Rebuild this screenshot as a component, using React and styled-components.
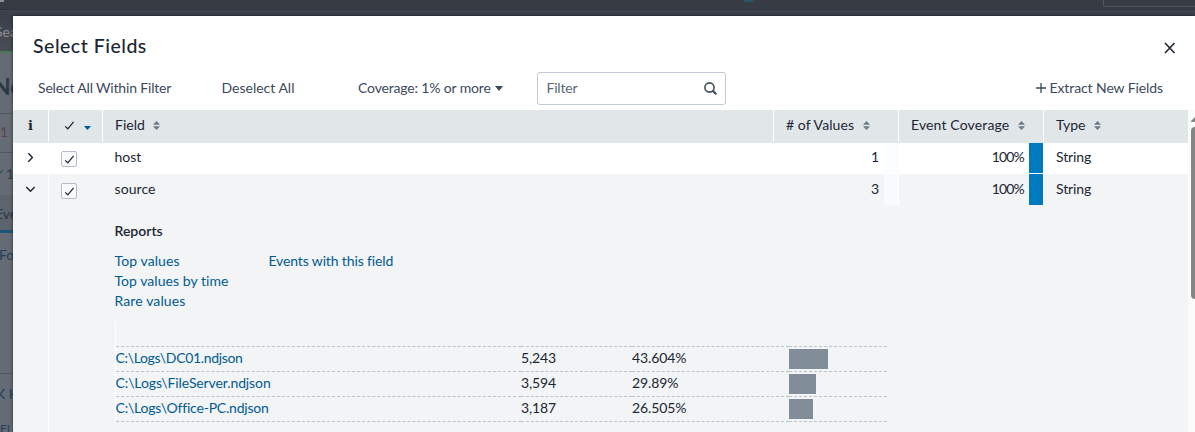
import React from "react";
import styled, { createGlobalStyle, css } from "styled-components";

const GlobalStyle = createGlobalStyle`
  * {
    box-sizing: border-box;
  }
  body {
    margin: 0;
    overflow: hidden;
    font-family: Lato, "Liberation Sans", sans-serif;
    font-size: 14px;
    line-height: 20px;
    color: #1a2733;
  }
`;

const Screen = styled.div`
  position: relative;
  height: 432px;
  overflow: hidden;
`;

/* dimmed search page behind the dialog */
const Backdrop = styled.div`
  position: absolute;
  inset: 0;
  display: flex;
  flex-direction: column;
  background: #656b74;
  white-space: nowrap;

  > * {
    flex-shrink: 0;
  }
`;

const GlobalBar = styled.div`
  display: flex;
  justify-content: flex-end;
  height: 10px;
  background: #363b44;
  border-bottom: 1px solid #2f343c;
`;

const GlobalFind = styled.div`
  width: 92px;
  height: 7px;
  border: 1px solid #50555e;
  border-width: 0 0 1px 1px;
  border-radius: 0 0 0 2px;
`;

const AppLabel = styled.div`
  width: 4px;
  height: 2px;
  margin-right: auto;
  background: #8b8f96;
`;

const Dot = styled.div`
  width: 10px;
  height: 2px;
  margin-right: 349px;
  border-radius: 0 0 5px 5px;
  background: #28566b;
`;

const AppBar = styled.div`
  height: 43px;
  padding-top: 12px;
  background: linear-gradient(#3f444f, #3a3f49 5px, #484d55);
  border-bottom: 2px solid #4e7359;
  color: #8a8e94;
`;

const BackText = styled.div`
  height: ${(props) => props.$height}px;
  margin-left: ${(props) => props.$left || 0}px;
  padding-top: ${(props) => props.$top || 0}px;
  font-size: ${(props) => props.$size || 14}px;
  font-weight: ${(props) => (props.$bold ? 700 : 400)};
  color: ${(props) => props.$color || "#2a3748"};
`;

const BackRow = styled.div`
  display: flex;
  height: ${(props) => props.$height}px;
  background: ${(props) => props.$bg || "#656b74"};
  border-top: ${(props) => (props.$line ? "1px solid #50565f" : "none")};
  border-bottom: ${(props) => (props.$active ? "3px solid #1b5676" : "none")};
`;

const Modal = styled.div`
  position: relative;
  display: flex;
  flex-direction: column;
  height: 416px;
  margin: 16px 0 0 13px;
  background: #fff;
  box-shadow: 0 0 3px rgba(0, 0, 0, 0.6);
`;

const ModalHeader = styled.div`
  display: flex;
  justify-content: space-between;
  height: 56px;
  padding: 18px 19px 0 20px;
`;

const Title = styled.h1`
  margin: 0;
  font-size: 19.5px;
  font-weight: 500;
  line-height: 24px;
  letter-spacing: 0.5px;
`;

const CloseButton = styled.button`
  display: flex;
  height: 13px;
  margin-top: 8px;
  padding: 0;
  border: 0;
  background: none;
`;

const Toolbar = styled.div`
  display: flex;
  align-items: center;
  height: 33px;
  margin-bottom: 5px;
  color: #3c4a5b;
`;

const ToolButton = styled.button`
  display: flex;
  align-items: center;
  gap: ${(props) => props.$gap || 0}px;
  width: ${(props) => props.$width}px;
  margin-left: ${(props) => props.$left || 0}px;
  padding: 0 0 1px;
  border: 0;
  background: none;
  color: inherit;
  font: inherit;
  letter-spacing: ${(props) => props.$track || 0}px;
  white-space: nowrap;
`;

const FilterBox = styled.div`
  display: flex;
  align-items: center;
  justify-content: space-between;
  width: 189px;
  height: 33px;
  padding: 0 8px 1px 8.5px;
  border: 1px solid #c0c9d4;
  border-radius: 3px;
  color: #5a6877;
  letter-spacing: -0.2px;
`;

const TableWrap = styled.div`
  display: flex;
  flex: 1;
`;

const Table = styled.div`
  display: flex;
  flex-direction: column;
  width: 1175px;
`;

const grid = css`
  display: grid;
  grid-template-columns: 36px 54px 671px 125px 145px 144px;
`;

const HeadRow = styled.div`
  ${grid}
  height: 33px;
  padding-bottom: 1px;
  background: #e1e6e9;
`;

const HeadCell = styled.div`
  display: flex;
  align-items: center;
  justify-content: ${(props) => (props.$center ? "center" : "flex-start")};
  gap: 8.5px;
  padding: 0 1px 2px ${(props) => props.$left || 0}px;
  border-right: ${(props) => (props.$last ? 0 : 1)}px solid #fff;
  letter-spacing: ${(props) => props.$track || 0}px;
  white-space: nowrap;
`;

const InfoMark = styled.span`
  padding-top: 1px;
  font-family: "DejaVu Serif", serif;
  font-size: 13px;
  font-weight: 700;
`;

const Row = styled.div`
  ${grid}
  height: ${(props) => (props.$open ? 32 : 31)}px;
  background: ${(props) => (props.$open ? "#f2f4f5" : "#fff")};
`;

const Cell = styled.div`
  display: flex;
  padding-left: ${(props) => props.$left || 0}px;
  padding-top: ${(props) => props.$top}px;
  border-right: ${(props) => (props.$line ? 1 : 0)}px solid #fff;
  letter-spacing: ${(props) => props.$track || 0}px;
`;

const NumberCell = styled.div`
  display: flex;
  align-items: stretch;
  justify-content: flex-end;
  gap: 5px;
  border-right: 1px solid #fff;
  line-height: ${(props) => (props.$open ? 30 : 28)}px;
`;

const PercentText = styled.span`
  letter-spacing: -0.85px;
`;

const Heat = styled.div`
  width: 14px;
  height: ${(props) => (props.$open ? 31 : 30)}px;
  background: ${(props) => props.$color};
`;

const Checkbox = styled.div`
  display: flex;
  align-items: center;
  justify-content: center;
  width: 16px;
  height: 16px;
  border: 1px solid #b3bdcb;
  border-radius: 2px;
  background: #fafbfc;
`;

const Detail = styled.div`
  display: grid;
  grid-template-columns: 36px 1fr;
  flex: 1;
  background: #f2f4f5;
`;

const Gutter = styled.div`
  border-right: 1px solid #fff;
`;

const DetailBody = styled.div`
  padding: 15px 0 0 66px;
`;

const Reports = styled.h5`
  margin: 0 0 10px -0.5px;
  font-size: 14px;
  font-weight: 600;
  line-height: 20px;
`;

const Links = styled.div`
  display: flex;
  margin-left: -0.5px;
`;

const LinkColumn = styled.div`
  display: flex;
  flex-direction: column;
  width: 154px;
  height: 70px;
  white-space: nowrap;
`;

const Link = styled.a`
  color: #005a93;
  letter-spacing: ${(props) => props.$track || 0}px;
`;

const ValuesTable = styled.div`
  width: 772px;
  margin-top: 1px;
  border-left: 1px solid #fff;
`;

const ValueRow = styled.div`
  display: grid;
  grid-template-columns: 405px 111px 157px 98px;
  height: 25px;
`;

const ValueCell = styled.div`
  padding-top: 1px;
  border-bottom: 1px dashed #b8c3cf;
  letter-spacing: ${(props) => props.$track || 0}px;
  text-indent: ${(props) => props.$shift || 0}px;
`;

const Bar = styled.div`
  height: 20px;
  margin-top: 1px;
  background: #818d99;
`;

const ScrollTrack = styled.div`
  display: flex;
  flex-direction: column;
  gap: 5px;
  width: 7px;
  padding: 7px 0 0 3px;
  background: #fbfbfb;
`;

const ScrollThumb = styled.div`
  height: 172px;
  border-radius: 4px 0 0 4px;
  background: #858585;
`;

const SortIcon = () => (
  <svg width="7" height="9" viewBox="0 0 7 9" fill="#6b7a88">
    <path d="M3.5 0 L7 3.7 H0Z" />
    <path d="M3.5 9 L0 5.3 H7Z" />
  </svg>
);

const CheckIcon = () => (
  <svg width="11" height="11" viewBox="0 0 11 11" fill="none">
    <path d="M1.2 6.4 L3.8 8.8 L9.6 1.9" stroke="#1a2733" strokeWidth="1.25" />
  </svg>
);

const HeadCaret = styled.span`
  display: flex;
  margin: 5px -4px 0 0;
`;

const Caret = ({ color, width = 8, height = 5 }) => (
  <svg width={width} height={height} viewBox="0 0 8 5" preserveAspectRatio="none">
    <path d="M0 0 H8 L4 5Z" fill={color} />
  </svg>
);

const Chevron = ({ open }) => (
  <svg width="10" height="10" viewBox="0 0 10 10" fill="none">
    <path
      d={open ? "M0.3 3 L4.5 7.2 L8.7 3" : "M2.3 0.2 L6.4 4.5 L2.3 8.8"}
      stroke="#1a2733"
      strokeWidth="1.4"
    />
  </svg>
);

const fields = [
  { name: "host", count: 1, heat: "#fbfdff" },
  { name: "source", count: 3, heat: "#f7fbff", open: true, track: 0.07 },
];

const values = [
  { name: "C:\\Logs\\DC01.ndjson", count: "5,243", percent: "43.604%", width: 39, track: -0.33 },
  { name: "C:\\Logs\\FileServer.ndjson", count: "3,594", percent: "29.89%", width: 27, track: -0.11 },
  { name: "C:\\Logs\\Office-PC.ndjson", count: "3,187", percent: "26.505%", width: 24, track: -0.21 },
];

const FieldRow = ({ field }) => (
  <Row $open={field.open}>
    <Cell $left={13} $top={10} $line={field.open}>
      <Chevron open={field.open} />
    </Cell>
    <Cell $left={12} $top={field.open ? 9 : 8}>
      <Checkbox>
        <CheckIcon />
      </Checkbox>
    </Cell>
    <Cell $left={11.5} $top={field.open ? 5 : 4} $track={field.track}>
      {field.name}
    </Cell>
    <NumberCell $open={field.open}>
      {field.count}
      <Heat $color={field.heat} $open={field.open} />
    </NumberCell>
    <NumberCell $open={field.open}>
      <PercentText>100%</PercentText>
      <Heat $color="#0079bf" $open={field.open} />
    </NumberCell>
    <Cell $left={12} $top={field.open ? 5 : 4} $track={-0.1}>
      String
    </Cell>
  </Row>
);

const App = () => {
  return (
    <Screen>
      <GlobalStyle />
      <Backdrop>
        <GlobalBar>
          <AppLabel />
          <Dot />
          <GlobalFind />
        </GlobalBar>
        <AppBar>
          <BackText $left={-5} $color="inherit">Sea</BackText>
        </AppBar>
        <BackText $height={60} $top={23} $size={23} $left={-7} $bold>
          Ne
        </BackText>
        <BackRow $height={39} $line>
          <BackText $top={8} $color="#5d4148">1</BackText>
        </BackRow>
        <BackRow $height={43} $line>
          <svg width="4" height="30" viewBox="0 0 4 30">
            <path d="M-2 22 L3 17" stroke="#245c4a" strokeWidth="1.5" />
          </svg>
          <BackText $top={11} $left={2} $color="#3d444f" $bold>12</BackText>
        </BackRow>
        <BackRow $height={38} $bg="#5e646d" $active>
          <BackText $top={9} $left={-5}>Eve</BackText>
        </BackRow>
        <BackText $height={140} $top={12} $left={-1} $color="#20405a">Fo</BackText>
        <BackRow $height={36} $line>
          <BackText $top={10} $left={-4} $color="#20405a">K H</BackText>
        </BackRow>
        <BackText $top={10} $size={12} $color="#20405a">FI</BackText>
      </Backdrop>
      <Modal>
        <ModalHeader>
          <Title>Select Fields</Title>
          <CloseButton>
            <svg width="13" height="12" viewBox="0 0 13 12" fill="none">
              <path d="M2 1 L11.5 11 M11.5 1 L2 11" stroke="#1a2733" strokeWidth="1.6" />
            </svg>
          </CloseButton>
        </ModalHeader>
        <Toolbar>
          <ToolButton $left={25} $width={183.5} $track={-0.17}>
            Select All Within Filter
          </ToolButton>
          <ToolButton $width={136.5}>Deselect All</ToolButton>
          <ToolButton $width={179} $track={-0.16} $gap={4}>
            Coverage: 1% or more
            <Caret color="#3c4a5b" />
          </ToolButton>
          <FilterBox>
            Filter
            <svg width="13" height="13" viewBox="0 0 13 13" fill="none" stroke="#3c4a5b">
              <circle cx="5.5" cy="5.5" r="4.6" strokeWidth="1.6" />
              <path d="M8.7 8.7 L12.2 12.2" strokeWidth="2.2" />
            </svg>
          </FilterBox>
          <ToolButton $left={310} $width={130} $track={-0.1} $gap={3.5}>
            <svg width="10" height="10" viewBox="0 0 10 10">
              <path d="M5 0 V10 M0 5 H10" stroke="#3c4a5b" strokeWidth="1.3" />
            </svg>
            Extract New Fields
          </ToolButton>
        </Toolbar>
        <TableWrap>
          <Table>
            <HeadRow>
              <HeadCell $center $left={1}>
                <InfoMark>i</InfoMark>
              </HeadCell>
              <HeadCell $center $left={1}>
                <CheckIcon />
                <HeadCaret>
                  <Caret color="#005a93" width={7} height={4} />
                </HeadCaret>
              </HeadCell>
              <HeadCell $left={12}>
                Field
                <SortIcon />
              </HeadCell>
              <HeadCell $left={12} $track={0.08}>
                # of Values
                <SortIcon />
              </HeadCell>
              <HeadCell $left={12} $track={0.14}>
                Event Coverage
                <SortIcon />
              </HeadCell>
              <HeadCell $left={12} $last>
                Type
                <SortIcon />
              </HeadCell>
            </HeadRow>
            {fields.map((field) => (
              <FieldRow key={field.name} field={field} />
            ))}
            <Detail>
              <Gutter />
              <DetailBody>
                <Reports>Reports</Reports>
                <Links>
                  <LinkColumn>
                    <Link $track={0.1}>Top values</Link>
                    <Link $track={0.04}>Top values by time</Link>
                    <Link $track={0.12}>Rare values</Link>
                  </LinkColumn>
                  <LinkColumn>
                    <Link $track={-0.14}>Events with this field</Link>
                  </LinkColumn>
                </Links>
                <ValuesTable>
                  <ValueRow>
                    <ValueCell />
                    <ValueCell />
                    <ValueCell />
                    <ValueCell />
                  </ValueRow>
                  {values.map((value) => (
                    <ValueRow key={value.name}>
                      <ValueCell $shift={-0.5}>
                        <Link $track={value.track}>{value.name}</Link>
                      </ValueCell>
                      <ValueCell $track={-0.15}>{value.count}</ValueCell>
                      <ValueCell $track={-0.12}>{value.percent}</ValueCell>
                      <ValueCell>
                        <Bar style={{ width: value.width }} />
                      </ValueCell>
                    </ValueRow>
                  ))}
                </ValuesTable>
              </DetailBody>
            </Detail>
          </Table>
          <ScrollTrack>
            <svg width="4" height="5" viewBox="0 0 4 5">
              <path d="M4 0 L0 4 V5 H4Z" fill="#858585" />
            </svg>
            <ScrollThumb />
          </ScrollTrack>
        </TableWrap>
      </Modal>
    </Screen>
  );
};

export default App;
